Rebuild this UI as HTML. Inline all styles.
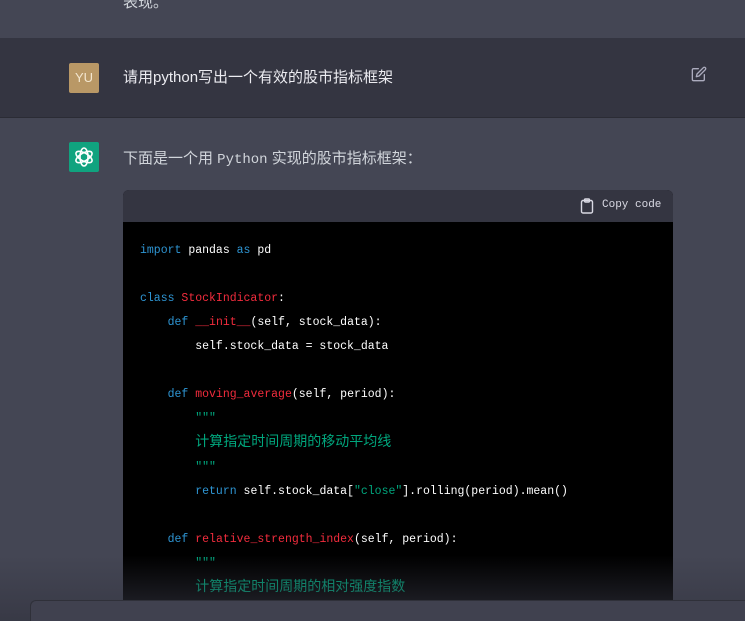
<!DOCTYPE html>
<html style="width:745px;height:621px;overflow:hidden"><head><meta charset="utf-8"><style>
*{margin:0;padding:0;box-sizing:border-box}
body{width:745px;height:621px;overflow:hidden;background:#444654;font-family:"Liberation Sans","Noto Sans CJK SC",sans-serif;color:#ececf1;position:relative}
.a{position:absolute}
.top{left:0;top:0;width:745px;height:38px;background:#444654}
.user{left:0;top:38px;width:745px;height:80px;background:#343541;border-bottom:1px solid #2b2c35}
.av{width:30px;height:30px;border-radius:2px}
.t{font-size:15px;color:#ececf1;white-space:nowrap}
.code{left:123px;top:190px;width:550px;height:431px;border-radius:6px 6px 0 0;overflow:hidden;background:#000}
.hd{height:32px;background:#343541;position:relative;font-family:"Liberation Mono",monospace;font-size:11px;color:#d9d9e3}
pre{font-family:"Liberation Mono","Noto Sans CJK SC",monospace;font-size:11.5px;line-height:24px;color:#fff;padding:17px 0 0 17px}
.k{color:#2e95d3}.f{color:#f22c3d}.s{color:#00a67d}
.cj{font-size:14px}
</style></head><body>
<div class="a top"></div>
<div class="a t" style="left:123px;top:-9px;color:#d1d5db">表现。</div>
<div class="a user"></div>
<div class="a av" style="left:69px;top:63px;background:#b99866;color:#f3e6cf;font-size:13px;text-align:center;line-height:30px">YU</div>
<div class="a t" style="left:123px;top:66px">请用python写出一个有效的股市指标框架</div>
<svg class="a" style="left:691px;top:66px" width="16" height="16" viewBox="0 0 24 24" fill="none" stroke="#acacbe" stroke-width="2" stroke-linecap="round" stroke-linejoin="round"><path d="M11 4H4a2 2 0 0 0-2 2v14a2 2 0 0 0 2 2h14a2 2 0 0 0 2-2v-7"/><path d="M18.5 2.5a2.1 2.1 0 0 1 3 3L12 15l-4 1 1-4 9.5-9.5z"/></svg>
<div class="a av" style="left:69px;top:142px;background:#10a37f"><svg width="30" height="30" viewBox="0 0 30 30" fill="none" stroke="#fff" stroke-width="1.6"><ellipse cx="15" cy="15" rx="4" ry="9"/><ellipse cx="15" cy="15" rx="4" ry="9" transform="rotate(60 15 15)"/><ellipse cx="15" cy="15" rx="4" ry="9" transform="rotate(-60 15 15)"/></svg></div>
<div class="a t" style="left:123px;top:147px;color:#d1d5db">下面是一个用 <span style="font-family:'Liberation Mono',monospace;font-size:14px">Python</span> 实现的股市指标框架：</div>
<div class="a code">
<div class="hd"><svg class="a" style="left:457px;top:8px" width="14" height="16" viewBox="0 0 14 16" fill="none" stroke="#d9d9e3" stroke-width="1.4"><rect x="1.5" y="2.5" width="11" height="12.5" rx="1.5"/><rect x="4.5" y="1" width="5" height="3" rx="1"/></svg><span class="a" style="left:479px;top:9px">Copy code</span></div>
<pre><span class="k">import</span> pandas <span class="k">as</span> pd

<span class="k">class</span> <span class="f">StockIndicator</span>:
    <span class="k">def</span> <span class="f">__init__</span>(self, stock_data):
        self.stock_data = stock_data

    <span class="k">def</span> <span class="f">moving_average</span>(self, period):
        <span class="s">"""</span>
        <span class="s cj">计算指定时间周期的移动平均线</span>
        <span class="s">"""</span>
        <span class="k">return</span> self.stock_data[<span class="s">"close"</span>].rolling(period).mean()

    <span class="k">def</span> <span class="f">relative_strength_index</span>(self, period):
        <span class="s">"""</span>
        <span class="s cj">计算指定时间周期的相对强度指数</span></pre>
</div>
<div class="a" style="left:0;top:555px;width:745px;height:66px;background:linear-gradient(rgba(52,53,65,0),rgba(52,53,65,.75))"></div>
<div class="a" style="left:30px;top:600px;width:715px;height:21px;background:#40414f;border:1px solid #2f3039;border-bottom:none;border-right:none;border-radius:6px 0 0 0"></div>
</body></html>
